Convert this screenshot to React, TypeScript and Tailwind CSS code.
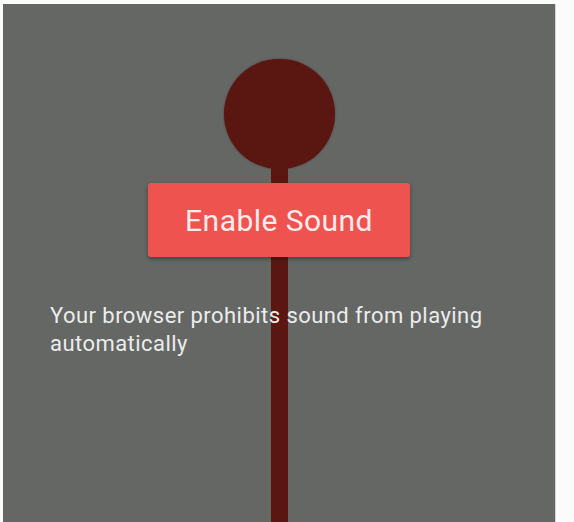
export default function App() {
  return (
    <div className="h-[522px] w-full overflow-hidden bg-[#fbfbfb] pl-[3px] pt-[4px]">
      <div className="relative h-[518px] w-[553px] border-r border-[#d6d6d6] bg-[#656765] font-['Roboto',sans-serif]">
        {/* pin drawing behind content */}
        <div className="pointer-events-none absolute inset-0 flex flex-col items-center pt-[55px]">
          <div className="h-[110px] w-[111px] rounded-full bg-[#5a1712] shadow-[0_0_2px_rgba(60,0,0,0.5)]" />
          <div className="-mt-[2px] w-[17px] flex-1 bg-[#5a1712]" />
        </div>

        <div className="relative flex flex-col">
          <div className="flex justify-center pt-[179px]">
            <button className="h-[74px] w-[262px] rounded-[3px] bg-[#ef5350] text-[30px] tracking-[0.45px] text-[#fdeceb] shadow-[0_2px_4px_rgba(0,0,0,0.35)]">
              Enable Sound
            </button>
          </div>
          <p className="mt-[45px] pl-[47px] pr-[40px] text-[22px] leading-[28px] tracking-[0.45px] text-[#ececec]">
            Your browser prohibits sound from playing automatically
          </p>
        </div>
      </div>
    </div>
  );
}
